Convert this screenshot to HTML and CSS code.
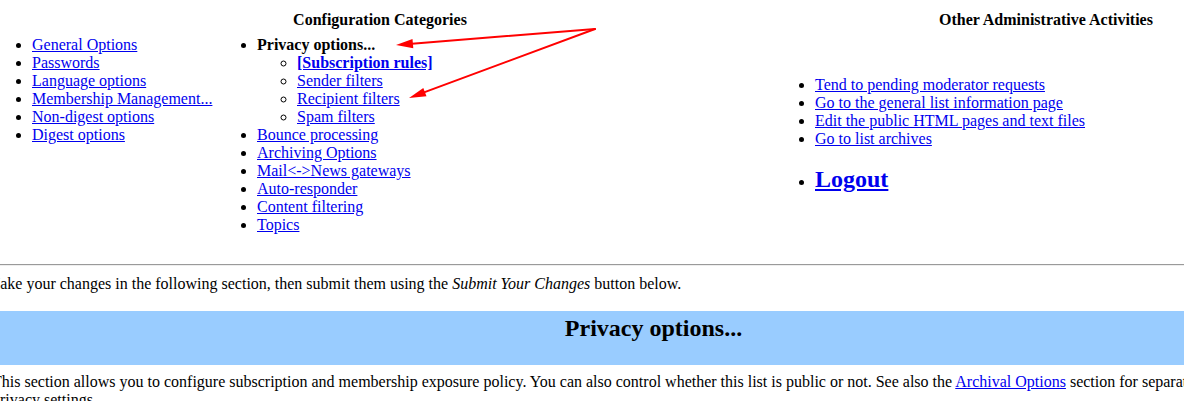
FILE: index.html
```html
<!DOCTYPE html>
<html>
<head>
<meta charset="utf-8">
<title>Privacy options</title>
<link rel="stylesheet" href="styles.css">
</head>
<body>
<div class="page">
  <div class="links">
    <div class="col-left">
      <div class="col-head cat-head">Configuration Categories</div>
      <div class="cats">
        <ul>
          <li><a href="#">General Options</a></li>
          <li><a href="#">Passwords</a></li>
          <li><a href="#">Language options</a></li>
          <li><a href="#">Membership Management...</a></li>
          <li><a href="#">Non-digest options</a></li>
          <li><a href="#">Digest options</a></li>
        </ul>
        <ul>
          <li><b>Privacy options...</b>
            <ul class="sub">
              <li><a href="#"><b>[Subscription rules]</b></a></li>
              <li><a href="#">Sender filters</a></li>
              <li><a href="#">Recipient filters</a></li>
              <li><a href="#">Spam filters</a></li>
            </ul>
          </li>
          <li><a href="#">Bounce processing</a></li>
          <li><a href="#">Archiving Options</a></li>
          <li><a href="#">Mail&lt;-&gt;News gateways</a></li>
          <li><a href="#">Auto-responder</a></li>
          <li><a href="#">Content filtering</a></li>
          <li><a href="#">Topics</a></li>
        </ul>
      </div>
    </div>
    <div class="col-right">
      <div class="col-head">Other Administrative Activities</div>
      <ul class="other">
        <li><a href="#">Tend to pending moderator requests</a></li>
        <li><a href="#">Go to the general list information page</a></li>
        <li><a href="#">Edit the public HTML pages and text files</a></li>
        <li><a href="#">Go to list archives</a><br>&nbsp;</li>
        <li class="logout"><a href="#"><b>Logout</b></a></li>
      </ul>
    </div>
  </div>
  <hr>
  <p class="intro">Make your changes in the following section, then submit them using the <em>Submit Your Changes</em> button below.</p>
  <div class="banner"><h2>Privacy options...</h2></div>
  <p class="desc">This section allows you to configure subscription and membership exposure policy. You can also control whether this list is public or not. See also the <a href="#">Archival Options</a> section for separate privacy settings.</p>
</div>
<svg class="arrows" width="1184" height="401" viewBox="0 0 1184 401" xmlns="http://www.w3.org/2000/svg">
  <line x1="595" y1="29" x2="412" y2="43.7" stroke="#ff0000" stroke-width="2" stroke-linecap="round"/>
  <polygon points="396,45 413.3,48.2 412.5,39.1" fill="#ff0000"/>
  <line x1="595" y1="29" x2="424" y2="92.4" stroke="#ff0000" stroke-width="2" stroke-linecap="round"/>
  <polygon points="409,98 426.5,96.3 423.3,87.9" fill="#ff0000"/>
</svg>
</body>
</html>
```

FILE: styles.css
```css
html, body {
  margin: 0;
  padding: 0;
  background: #ffffff;
}
body {
  position: relative;
  width: 1184px;
  height: 401px;
  overflow: hidden;
  font-family: "Liberation Serif", "Times New Roman", serif;
  font-size: 16px;
  line-height: 18px;
  color: #000000;
}
.page {
  margin-left: -14px;
  width: 1335px;
  padding-top: 11px;
}
a {
  color: #0000ee;
}
.links {
  display: grid;
  grid-template-columns: 786px 548px;
}
.col-head {
  text-align: center;
  font-weight: bold;
}
.cat-head {
  padding-left: 2px;
}
.cats {
  display: grid;
  grid-template-columns: 225px auto;
  padding-left: 6px;
  margin-top: 7px;
}
ul {
  margin: 0;
  padding-left: 40px;
}
.other {
  margin: 47px 0 0 3px;
}
.logout {
  margin-top: -1px;
}
.logout a {
  font-size: 24px;
  line-height: 28px;
}
hr {
  margin: 30px 0 0;
}
.intro {
  margin: 9px 0 0;
}
.banner {
  margin-top: 18px;
  background: #99ccff;
  padding: 3px 0 23px;
  text-align: center;
}
.banner h2 {
  margin: 0;
  font-size: 24px;
  line-height: 28px;
}
.desc {
  margin: 8px 0 0 6px;
  width: 1228px;
}
.arrows {
  position: absolute;
  left: 0;
  top: 0;
  pointer-events: none;
}
```
